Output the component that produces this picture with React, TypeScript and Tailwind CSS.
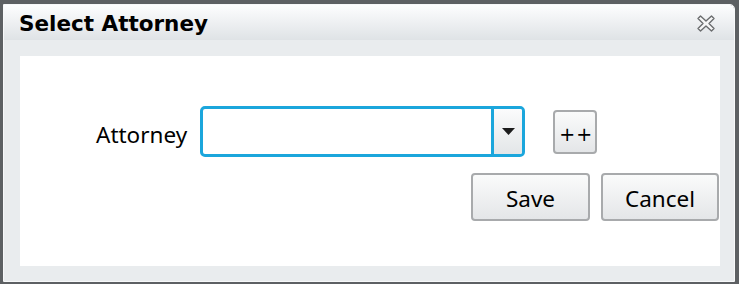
// App.tsx
const sans = { fontFamily: '"Noto Sans", "Open Sans", sans-serif' };

function CloseIcon() {
  return (
    <svg width="18" height="17" viewBox="0 0 18 17" aria-hidden="true">
      <path
        d="M1 3.5 L3.5 1 L9 6 L14.5 1 L17 3.5 L12 8.5 L17 13.5 L14.5 16 L9 11 L3.5 16 L1 13.5 L6 8.5 Z"
        fill="#f6f6f6"
        stroke="#6a6c6e"
        strokeWidth="1.4"
        strokeLinejoin="round"
      />
    </svg>
  );
}

function PlainButton({ label, className }: { label: string; className: string }) {
  return (
    <button
      type="button"
      className={`flex items-center justify-center rounded-[4px] border-2 border-[#a8aaac] bg-gradient-to-b from-[#fafbfb] to-[#e4e6e8] text-black ${className}`}
    >
      {label}
    </button>
  );
}

export default function App() {
  return (
    <div className="h-[284px] w-[739px] overflow-hidden bg-[#5d6063] pb-[2px] pl-[3px] pr-[4px] pt-[4px]">
      <div className="flex h-[278px] w-[732px] flex-col overflow-hidden rounded-tr-[5px] border border-[#f7f8f9]">
        {/* title bar */}
        <div className="flex h-[35px] items-center justify-between bg-gradient-to-b from-[#fdfdfe] to-[#dfe3e6] pl-[15px] pr-[19px] pt-[2px]">
          <span
            className="text-[21.5px] font-bold leading-none text-black"
            style={{ fontFamily: '"DejaVu Sans", Verdana, sans-serif' }}
          >
            Select Attorney
          </span>
          <CloseIcon />
        </div>

        {/* body */}
        <div className="flex-1 bg-[#e9ecee] pb-[15px] pl-[16px] pr-[14px] pt-[16px]">
          <div className="h-[210px] bg-white pt-[50px]" style={sans}>
            <div className="flex items-center pl-[76px]">
              <span className="pt-[7px] text-[22.5px] leading-none text-black">Attorney</span>
              <div className="ml-[13px] flex h-[51px] w-[325px] overflow-hidden rounded-[5px] border-[3px] border-[#1ba6dc] bg-white">
                <div className="flex-1" />
                <div className="w-[3px] bg-[#1ba6dc]" />
                <div className="flex w-[28px] items-center justify-center bg-gradient-to-b from-[#fbfbfc] to-[#e3e6e8]">
                  <svg width="13" height="7" viewBox="0 0 13 7" aria-hidden="true">
                    <path d="M0 0 H13 L6.5 7 Z" fill="#1c1c1c" />
                  </svg>
                </div>
              </div>
              <button
                type="button"
                className="ml-[28px] flex h-[44px] w-[44px] items-center justify-center rounded-[4px] border-2 border-[#a8aaac] bg-gradient-to-b from-[#fafbfb] to-[#e4e6e8] pl-[2px] pt-[6px] text-[19px] leading-none tracking-[1px] text-black"
                style={{ fontFamily: '"DejaVu Sans", sans-serif' }}
              >
                ++
              </button>
            </div>
            <div className="mt-[16px] flex justify-end gap-[11px] pr-[1px]">
              <PlainButton label="Save" className="h-[48px] w-[119px] pt-[3px] text-[22.5px]" />
              <PlainButton label="Cancel" className="h-[48px] w-[118px] pt-[3px] text-[22.5px]" />
            </div>
          </div>
        </div>
      </div>
    </div>
  );
}
